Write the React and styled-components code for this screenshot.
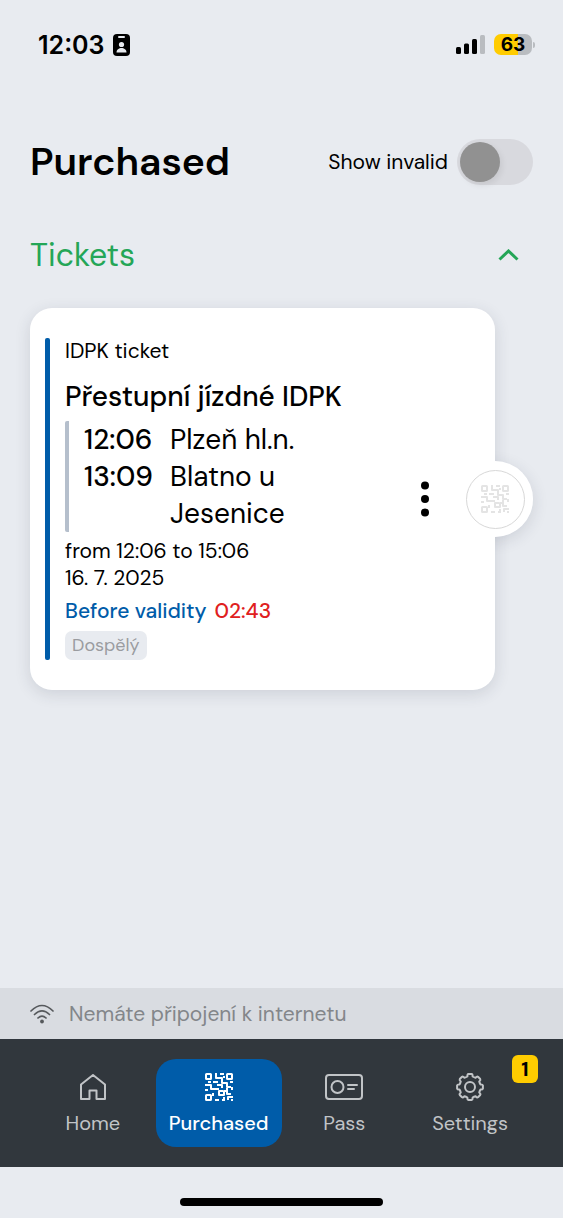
import React, { useState } from 'react'
import styled, { createGlobalStyle } from 'styled-components'

const GlobalStyle = createGlobalStyle`
  * {
    box-sizing: border-box;
  }
  body {
    margin: 0;
    background: #e8ebf0;
    color: #000;
    font-family: 'DM Sans', Inter, 'Liberation Sans', sans-serif;
    font-optical-sizing: none;
  }
  button {
    border: 0;
    padding: 0;
    background: none;
    font-family: inherit;
    color: inherit;
    cursor: pointer;
  }
  h1, h2, h3, p {
    margin: 0;
  }
  svg {
    display: block;
  }
`

// Layout
const Page = styled.div`
  display: flex;
  flex-direction: column;
  min-height: 100vh;
`

const StatusBar = styled.header`
  display: flex;
  align-items: center;
  justify-content: space-between;
  height: 89px;
  padding: 0 28px 0 38px;
`

const StatusGroup = styled.div`
  display: flex;
  align-items: center;
  gap: ${props => props.$gap}px;
`

const Clock = styled.span`
  font-family: Inter, sans-serif;
  font-size: 25px;
  font-weight: 600;
  line-height: 32px;
`

const Battery = styled.div`
  display: flex;
  align-items: center;
  gap: 1px;
  &::after {
    content: '';
    width: 2px;
    height: 6px;
    border-radius: 0 2px 2px 0;
    background: #b9bcc0;
  }
`

const BatteryBody = styled.span`
  width: 38px;
  border-radius: 7px;
  background: linear-gradient(to right, #fc0 63%, #b9bcc0 63%);
  font-family: Inter, sans-serif;
  font-size: 19px;
  font-weight: 700;
  line-height: 21px;
  text-align: center;
`

const Main = styled.main`
  flex: 1;
  padding: 49px 30px 30px;
`

const TitleRow = styled.div`
  display: flex;
  align-items: center;
  justify-content: space-between;
  height: 48px;
`

const Title = styled.h1`
  font-size: 39px;
  font-weight: 600;
  line-height: 48px;
`

const SwitchLabel = styled.label`
  display: flex;
  align-items: center;
  gap: 9px;
  font-size: 21px;
  line-height: 28px;
`

const Switch = styled.input`
  appearance: none;
  width: 76px;
  height: 46px;
  margin: 0;
  padding: 3px;
  border-radius: 23px;
  background: #d8d9de;
  cursor: pointer;
  &::before {
    content: '';
    display: block;
    width: 40px;
    height: 40px;
    border-radius: 50%;
    background: #919191;
    box-shadow: 2px 3px 6px rgba(0, 0, 0, 0.08);
  }
  &:checked::before {
    margin-left: auto;
    background: #005ca9;
  }
`

const SectionToggle = styled.button`
  display: flex;
  align-items: center;
  justify-content: space-between;
  width: 100%;
  margin-top: 48px;
  padding-right: 14px;
  color: #24a657;
  font-size: 32px;
  line-height: 42px;
`

// Ticket
const TicketCard = styled.article`
  position: relative;
  display: flex;
  align-items: stretch;
  margin: 32px 38px 0 0;
  padding: 30px 58px 30px 15px;
  border-radius: 22px;
  background: #fff;
  box-shadow: 0 4px 16px rgba(40, 50, 70, 0.14);
`

const TicketStripe = styled.div`
  flex: none;
  width: 5px;
  margin-right: 15px;
  border-radius: 2px;
  background: #005ca9;
`

const TicketBody = styled.div`
  flex: 1;
  display: flex;
  flex-direction: column;
  align-items: flex-start;
`

const Text = styled.p`
  font-size: 21px;
  line-height: 27px;
`

const TicketName = styled.h3`
  padding: 13px 0 5px;
  font-size: 28px;
  font-weight: 500;
  line-height: 38px;
`

const Stops = styled.div`
  display: grid;
  grid-template-columns: 70px 150px;
  column-gap: 16px;
  margin-bottom: 6px;
  padding-left: 15px;
  border-left: 4px solid #b5bfcc;
  border-radius: 2px;
  font-size: 28px;
  line-height: 37px;
`

const StopTime = styled.time`
  font-weight: 500;
`

const Validity = styled.p`
  display: flex;
  gap: 8px;
  padding: 6px 0;
  color: #005ca9;
  font-size: 21px;
  font-weight: 500;
  line-height: 27px;
`

const Countdown = styled.span`
  color: #e02020;
`

const Tag = styled.span`
  padding: 0 7px;
  border-radius: 7px;
  background: #e8ebf0;
  color: #9a9ca0;
  font-size: 18px;
  line-height: 29px;
`

const MenuButton = styled.button`
  display: grid;
  place-items: center;
  align-self: center;
  width: 24px;
  height: 48px;
`

const CodeButton = styled.button`
  position: absolute;
  top: calc(50% - 38px);
  right: -38px;
  display: grid;
  place-items: center;
  width: 76px;
  height: 76px;
  border-radius: 50%;
  background: #fff;
  color: #e4e4e4;
  /* keep the shadow on the part that sticks out of the card */
  &::before {
    content: '';
    position: absolute;
    inset: 0;
    z-index: -1;
    border-radius: 50%;
    box-shadow: 0 4px 16px rgba(40, 50, 70, 0.14);
    clip-path: inset(-30px -30px -30px 38px);
  }
`

const CodeRing = styled.span`
  display: grid;
  place-items: center;
  width: 59px;
  height: 59px;
  border: 1px solid #d8d8d8;
  border-radius: 50%;
`

// Bottom
const OfflineBar = styled.div`
  display: flex;
  align-items: center;
  gap: 15px;
  height: 51px;
  padding: 0 30px;
  background: #d9dce1;
  color: #83868a;
  font-size: 21px;
`

const Nav = styled.nav`
  display: grid;
  grid-template-columns: repeat(4, 1fr);
  padding: 20px 30px;
  background: #31373d;
`

const NavItem = styled.a`
  position: relative;
  display: flex;
  flex-direction: column;
  align-items: center;
  gap: 6px;
  height: 88px;
  padding-top: 12px;
  border-radius: 20px;
  background: ${props => (props.$active ? '#005ca9' : 'transparent')};
  color: ${props => (props.$active ? '#fff' : '#c1c4c7')};
  font-size: 20px;
  font-weight: ${props => (props.$active ? 500 : 400)};
  line-height: 28px;
  text-decoration: none;
`

const NavIcon = styled.span`
  display: grid;
  place-items: center;
  height: 32px;
`

const NavBadge = styled.span`
  position: absolute;
  top: -4px;
  right: -5px;
  width: 26px;
  border-radius: 6px;
  background: #fc0;
  color: #000;
  font-size: 20px;
  font-weight: 700;
  line-height: 28px;
  text-align: center;
`

const HomeArea = styled.div`
  display: flex;
  justify-content: center;
  height: 51px;
  padding-top: 31px;
  &::after {
    content: '';
    width: 36%;
    height: 8px;
    border-radius: 4px;
    background: #000;
  }
`

// Icons
const IdIcon = () => (
  <svg width="17" height="22" viewBox="0 0 17 22" aria-hidden="true">
    <rect width="17" height="22" rx="4" />
    <rect x="5" y="2" width="7" height="2" rx="1" fill="#e8ebf0" />
    <circle cx="8.5" cy="10.5" r="2.6" fill="#e8ebf0" />
    <path d="M3.5 18.5c0-6 10-6 10 0z" fill="#e8ebf0" />
  </svg>
)

const SignalIcon = () => (
  <svg width="29" height="19" viewBox="0 0 29 19" aria-hidden="true">
    <rect y="12" width="5" height="7" rx="1.5" />
    <rect x="8" y="8.5" width="5" height="10.5" rx="1.5" />
    <rect x="16" y="4" width="5" height="15" rx="1.5" />
    <rect x="24" width="5" height="19" rx="1.5" fill="#b9bcc0" />
  </svg>
)

const ChevronIcon = () => (
  <svg width="21" height="13" viewBox="0 0 21 13" fill="none" stroke="currentColor" strokeWidth="3" aria-hidden="true">
    <path d="M1.5 10.5 10.5 2l9 8.5" />
  </svg>
)

const DotsIcon = () => (
  <svg width="8" height="36" viewBox="0 0 8 36" aria-hidden="true">
    <circle cx="4" cy="4.5" r="4" />
    <circle cx="4" cy="18" r="4" />
    <circle cx="4" cy="31.5" r="4" />
  </svg>
)

const CodeIcon = () => (
  <svg width="28" height="28" viewBox="0 0 28 28" fill="none" stroke="currentColor" strokeWidth="2" aria-hidden="true">
    <rect x="1" y="1" width="5" height="5" rx="0.5" />
    <rect x="22" y="1" width="5" height="5" rx="0.5" />
    <rect x="1" y="22" width="5" height="5" rx="0.5" />
    <path
      strokeLinejoin="round"
      d="M11 0v5h6v5h5v4h4M15 1h4M18 4h2M8 9h5M0 12h6v4h8M3 9h3M0 17h3M12 12h5v3M25 9h3M27 14v3M22 15v6h4M18 18h-4v4h5v-4h4M8 20v3M10 27h4M17 27h3M19 24v3M23 27v-3h5M26 27h2"
    />
  </svg>
)

const WifiIcon = () => (
  <svg width="24" height="20" viewBox="0 0 24 20" fill="none" stroke="#56595c" strokeWidth="1.7" strokeLinecap="round" aria-hidden="true">
    <path d="M1 7Q12-4 23 7M4.5 10.5q7.5-7.2 15 0M8 14q4-4 8 0" />
    <circle cx="12" cy="17.5" r="1.9" fill="#56595c" stroke="none" />
  </svg>
)

const HomeIcon = () => (
  <svg width="26" height="26" viewBox="0 0 26 26" fill="none" stroke="currentColor" strokeWidth="2" strokeLinejoin="round" aria-hidden="true">
    <path d="M1 10.5 13 1l12 9.5V25h-8.500v-8.500h-7V25H1z" />
  </svg>
)

const PassIcon = () => (
  <svg width="38" height="26" viewBox="0 0 38 26" fill="none" stroke="currentColor" strokeWidth="2" aria-hidden="true">
    <rect x="1" y="1" width="36" height="24" rx="3" />
    <circle cx="12.5" cy="13" r="6" />
    <path d="M23 11h9M23 15h6" strokeLinecap="round" />
  </svg>
)

// eight rounded teeth joined by shallow notches
const gearPath = Array.from({ length: 8 }, (_, i) => {
  const at = (r, deg) => {
    const a = ((i * 45 + deg - 90) * Math.PI) / 180
    return `${(14 + r * Math.cos(a)).toFixed(2)} ${(14 + r * Math.sin(a)).toFixed(2)}`
  }
  return `${i ? 'L' : 'M'}${at(10.8, -14)}Q${at(13, -12)} ${at(13, -7)}L${at(13, 7)}Q${at(13, 12)} ${at(10.8, 14)}Q${at(10.4, 22.5)} ${at(10.8, 31)}`
}).join('')

const GearIcon = () => (
  <svg width="28" height="28" viewBox="0 0 28 28" fill="none" stroke="currentColor" strokeWidth="2" strokeLinejoin="round" aria-hidden="true">
    <path d={`${gearPath}Z`} />
    <circle cx="14" cy="14" r="5" />
  </svg>
)

const tabs = [
  { label: 'Home', icon: <HomeIcon /> },
  { label: 'Purchased', icon: <CodeIcon />, active: true },
  { label: 'Pass', icon: <PassIcon /> },
  { label: 'Settings', icon: <GearIcon />, badge: 1 },
]

const Ticket = () => (
  <TicketCard>
    <TicketStripe />
    <TicketBody>
      <Text>IDPK ticket</Text>
      <TicketName>Přestupní jízdné IDPK</TicketName>
      <Stops>
        <StopTime>12:06</StopTime>
        <span>Plzeň hl.n.</span>
        <StopTime>13:09</StopTime>
        <span>Blatno u Jesenice</span>
      </Stops>
      <Text>from 12:06 to 15:06</Text>
      <Text>16. 7. 2025</Text>
      <Validity>
        Before validity <Countdown>02:43</Countdown>
      </Validity>
      <Tag>Dospělý</Tag>
    </TicketBody>
    <MenuButton aria-label="Ticket options">
      <DotsIcon />
    </MenuButton>
    <CodeButton aria-label="Show code">
      <CodeRing>
        <CodeIcon />
      </CodeRing>
    </CodeButton>
  </TicketCard>
)

const App = () => {
  const [open, setOpen] = useState(true)
  return (
    <>
      <GlobalStyle />
      <Page>
        <StatusBar>
          <StatusGroup $gap={8}>
            <Clock>12:03</Clock>
            <IdIcon />
          </StatusGroup>
          <StatusGroup $gap={9}>
            <SignalIcon />
            <Battery>
              <BatteryBody>63</BatteryBody>
            </Battery>
          </StatusGroup>
        </StatusBar>
        <Main>
          <TitleRow>
            <Title>Purchased</Title>
            <SwitchLabel htmlFor="invalid">
              Show invalid
              <Switch id="invalid" type="checkbox" role="switch" />
            </SwitchLabel>
          </TitleRow>
          <SectionToggle aria-expanded={open} onClick={() => setOpen(!open)}>
            Tickets
            <ChevronIcon />
          </SectionToggle>
          {open && <Ticket />}
        </Main>
        <OfflineBar role="status">
          <WifiIcon />
          Nemáte připojení k internetu
        </OfflineBar>
        <Nav>
          {tabs.map(tab => (
            <NavItem key={tab.label} href={`#${tab.label.toLowerCase()}`} $active={tab.active}>
              <NavIcon>{tab.icon}</NavIcon>
              {tab.label}
              {tab.badge && <NavBadge>{tab.badge}</NavBadge>}
            </NavItem>
          ))}
        </Nav>
        <HomeArea />
      </Page>
    </>
  )
}

export default App
